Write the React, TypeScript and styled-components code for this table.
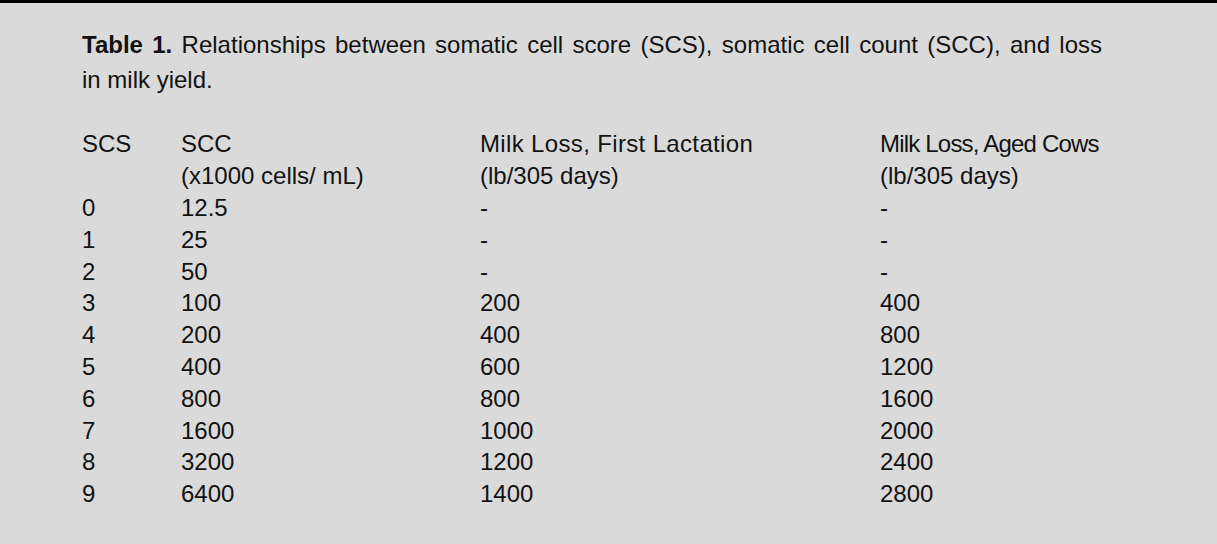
import React from 'react';
import styled, { createGlobalStyle } from 'styled-components';

const GlobalStyle = createGlobalStyle`
  html, body {
    margin: 0;
    padding: 0;
    background: #dadada;
  }
  body {
    font-family: 'Liberation Sans', Arial, Helvetica, sans-serif;
    color: #121212;
  }
`;

const Panel = styled.section`
  box-sizing: border-box;
  width: 1217px;
  min-height: 544px;
  background: #dadada;
  border-top: 3px solid #000;
  padding: 24px 0 0 82px;
`;

const Caption = styled.div`
  width: 1020px;
  margin-bottom: 31px;
  font-size: 24px;
  line-height: 35px;
`;

const CaptionLine = styled.div<{ $justify?: boolean }>`
  white-space: ${(p) => (p.$justify ? 'normal' : 'nowrap')};
  text-align: ${(p) => (p.$justify ? 'justify' : 'left')};
  text-align-last: ${(p) => (p.$justify ? 'justify' : 'auto')};
`;

const CaptionLabel = styled.strong`
  font-weight: 700;
`;

const Table = styled.div`
  display: grid;
  grid-template-columns: 99px 299px 400px 1fr;
  font-size: 24px;
`;

const HeadCell = styled.div`
  line-height: 32px;
  white-space: nowrap;
`;

const Spaced = styled.span<{ $spacing: number }>`
  letter-spacing: ${(p) => p.$spacing}px;
`;

const Cell = styled.div`
  line-height: 31.8px;
`;

const rows: [string, string, string, string][] = [
  ['0', '12.5', '-', '-'],
  ['1', '25', '-', '-'],
  ['2', '50', '-', '-'],
  ['3', '100', '200', '400'],
  ['4', '200', '400', '800'],
  ['5', '400', '600', '1200'],
  ['6', '800', '800', '1600'],
  ['7', '1600', '1000', '2000'],
  ['8', '3200', '1200', '2400'],
  ['9', '6400', '1400', '2800'],
];

const App: React.FC = () => {
  return (
    <>
      <GlobalStyle />
      <Panel>
        <Caption>
          <CaptionLine $justify>
            <CaptionLabel>Table 1.</CaptionLabel> Relationships between somatic cell score (SCS), somatic cell count (SCC), and loss
          </CaptionLine>
          <CaptionLine>in milk yield.</CaptionLine>
        </Caption>
        <Table>
          <HeadCell>SCS</HeadCell>
          <HeadCell>
            SCC
            <br />
            (x1000 cells/ mL)
          </HeadCell>
          <HeadCell>
            <Spaced $spacing={0.35}>Milk Loss, First Lactation</Spaced>
            <br />
            (lb/305 days)
          </HeadCell>
          <HeadCell>
            <Spaced $spacing={-0.8}>Milk Loss, Aged Cows</Spaced>
            <br />
            (lb/305 days)
          </HeadCell>
          {rows.map((r) =>
            r.map((v, i) => <Cell key={`${r[0]}-${i}`}>{v}</Cell>)
          )}
        </Table>
      </Panel>
    </>
  );
};

export default App;
